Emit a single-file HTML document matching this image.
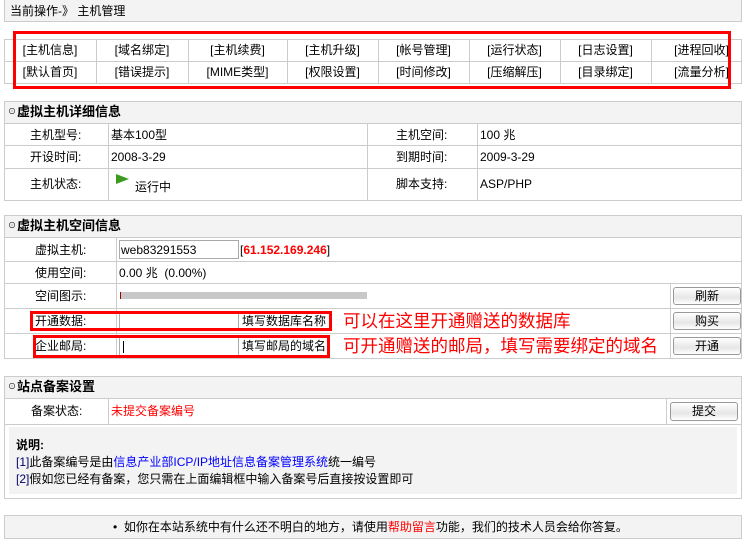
<!DOCTYPE html>
<html><head><meta charset="utf-8"><style>
*{margin:0;padding:0;box-sizing:border-box}
body{width:745px;height:543px;background:#fff;font-family:"Liberation Sans","Noto Sans CJK SC",sans-serif;font-size:12px;color:#000;position:relative;overflow:hidden}
.a{position:absolute}
.bx{position:absolute;border:1px solid #ccc}
.h{position:absolute;background:#f3f3f3;border:1px solid #ccc;font-weight:bold;font-size:13px;line-height:20px;padding-left:3px}
.h i{font-style:normal;font-size:8px;font-weight:normal;vertical-align:2px;margin-right:1px}
.l{position:absolute;border-left:1px solid #ccc;width:0}
.r{position:absolute;border-top:1px solid #ccc;height:0}
.t{position:absolute;line-height:14px;white-space:nowrap}
.c{text-align:center}
.red{color:#f00}
.btn{position:absolute;width:68px;height:19px;border:1px solid #999;border-radius:3px;background:linear-gradient(#fff,#e6e6e6 60%,#fff);text-align:center;line-height:17px;font-size:12px}
.inp{position:absolute;background:#fff;border:1px solid #aaa;height:19px}
.rb{position:absolute;border:3px solid #f00}
</style></head><body>
<div class="bx" style="left:4px;top:0;width:738px;height:22px;background:#f3f3f3;border-top:none"></div>
<div class="t" style="left:10px;top:4px;font-size:12px">当前操作-》 主机管理</div>

<div class="bx" style="left:4px;top:39px;width:738px;height:45px"></div>
<div class="r" style="left:4px;top:61px;width:738px"></div>
<div class="l" style="left:96px;top:39px;height:45px"></div>
<div class="l" style="left:188px;top:39px;height:45px"></div>
<div class="l" style="left:287px;top:39px;height:45px"></div>
<div class="l" style="left:378px;top:39px;height:45px"></div>
<div class="l" style="left:469px;top:39px;height:45px"></div>
<div class="l" style="left:560px;top:39px;height:45px"></div>
<div class="l" style="left:651px;top:39px;height:45px"></div>
<div class="t c" style="left:4px;top:43px;width:92px">[主机信息]</div>
<div class="t c" style="left:96px;top:43px;width:92px">[域名绑定]</div>
<div class="t c" style="left:188px;top:43px;width:99px">[主机续费]</div>
<div class="t c" style="left:287px;top:43px;width:91px">[主机升级]</div>
<div class="t c" style="left:378px;top:43px;width:91px">[帐号管理]</div>
<div class="t c" style="left:469px;top:43px;width:91px">[运行状态]</div>
<div class="t c" style="left:560px;top:43px;width:91px">[日志设置]</div>
<div class="t c" style="left:651px;top:43px;width:91px;padding-left:10px">[进程回收]</div>
<div class="t c" style="left:4px;top:65px;width:92px">[默认首页]</div>
<div class="t c" style="left:96px;top:65px;width:92px">[错误提示]</div>
<div class="t c" style="left:188px;top:65px;width:99px">[MIME类型]</div>
<div class="t c" style="left:287px;top:65px;width:91px">[权限设置]</div>
<div class="t c" style="left:378px;top:65px;width:91px">[时间修改]</div>
<div class="t c" style="left:469px;top:65px;width:91px">[压缩解压]</div>
<div class="t c" style="left:560px;top:65px;width:91px">[目录绑定]</div>
<div class="t c" style="left:651px;top:65px;width:91px;padding-left:10px">[流量分析]</div>
<div class="rb" style="left:13px;top:31px;width:718px;height:58px"></div>

<div class="bx" style="left:4px;top:101px;width:738px;height:100px"></div>
<div class="h" style="left:4px;top:101px;width:738px;height:23px"><i>⊙</i>虚拟主机详细信息</div>
<div class="r" style="left:4px;top:145px;width:738px"></div>
<div class="r" style="left:4px;top:168px;width:738px"></div>
<div class="l" style="left:108px;top:123px;height:78px"></div>
<div class="l" style="left:367px;top:123px;height:78px"></div>
<div class="l" style="left:477px;top:123px;height:78px"></div>
<div class="t" style="left:30px;top:128px">主机型号:</div>
<div class="t" style="left:111px;top:128px">基本100型</div>
<div class="t" style="left:396px;top:128px">主机空间:</div>
<div class="t" style="left:480px;top:128px">100 兆</div>
<div class="t" style="left:30px;top:150px">开设时间:</div>
<div class="t" style="left:111px;top:150px">2008-3-29</div>
<div class="t" style="left:396px;top:150px">到期时间:</div>
<div class="t" style="left:480px;top:150px">2009-3-29</div>
<div class="t" style="left:30px;top:177px">主机状态:</div>
<svg class="a" style="left:116px;top:174px" width="14" height="12"><path d="M0 0L13 5L0 10Z" fill="#3c9a1e"/></svg>
<div class="t" style="left:135px;top:180px">运行中</div>
<div class="t" style="left:396px;top:177px">脚本支持:</div>
<div class="t" style="left:480px;top:177px">ASP/PHP</div>

<div class="bx" style="left:4px;top:215px;width:738px;height:144px"></div>
<div class="h" style="left:4px;top:215px;width:738px;height:23px"><i>⊙</i>虚拟主机空间信息</div>
<div class="r" style="left:4px;top:261px;width:738px"></div>
<div class="r" style="left:4px;top:283px;width:738px"></div>
<div class="r" style="left:4px;top:308px;width:738px"></div>
<div class="r" style="left:4px;top:333px;width:738px"></div>
<div class="l" style="left:116px;top:237px;height:122px"></div>
<div class="l" style="left:670px;top:283px;height:76px"></div>
<div class="t" style="left:35px;top:243px">虚拟主机:</div>
<div class="inp" style="left:119px;top:240px;width:120px"></div>
<div class="t" style="left:121px;top:243px">web83291553</div>
<div class="t" style="left:240px;top:243px">[<b class="red">61.152.169.246</b>]</div>
<div class="t" style="left:35px;top:266px">使用空间:</div>
<div class="t" style="left:119px;top:266px">0.00 兆 &nbsp;(0.00%)</div>
<div class="t" style="left:35px;top:289px">空间图示:</div>
<div class="a" style="left:120px;top:292px;width:247px;height:7px;background:#c8c8c8;border-left:1px solid #900"></div>
<div class="btn" style="left:673px;top:287px;height:18px;line-height:16px">刷新</div>
<div class="t" style="left:35px;top:314px">开通数据:</div>
<div class="inp" style="left:119px;top:312px;width:120px"></div>
<div class="t" style="left:242px;top:314px">填写数据库名称</div>
<div class="btn" style="left:673px;top:312px;height:18px;line-height:16px">购买</div>
<div class="t" style="left:35px;top:339px">企业邮局:</div>
<div class="inp" style="left:119px;top:337px;width:120px"><div style="position:absolute;left:3px;top:3px;width:1px;height:12px;background:#000"></div></div>
<div class="t" style="left:242px;top:339px">填写邮局的域名</div>
<div class="btn" style="left:673px;top:337px;height:18px;line-height:16px">开通</div>
<div class="rb" style="left:30px;top:311px;width:302px;height:20px"></div>
<div class="rb" style="left:33px;top:335px;width:297px;height:23px"></div>
<div class="t red" style="left:343px;top:311px;font-size:17.5px;line-height:20px">可以在这里开通赠送的数据库</div>
<div class="t red" style="left:343px;top:336px;font-size:17.5px;line-height:20px">可开通赠送的邮局，填写需要绑定的域名</div>

<div class="bx" style="left:4px;top:376px;width:738px;height:123px"></div>
<div class="h" style="left:4px;top:376px;width:738px;height:23px"><i>⊙</i>站点备案设置</div>
<div class="r" style="left:4px;top:424px;width:738px"></div>
<div class="l" style="left:108px;top:398px;height:26px"></div>
<div class="l" style="left:666px;top:398px;height:26px"></div>
<div class="t" style="left:31px;top:404px">备案状态:</div>
<div class="t red" style="left:111px;top:404px">未提交备案编号</div>
<div class="btn" style="left:670px;top:402px">提交</div>
<div class="a" style="left:9px;top:427px;width:728px;height:67px;background:#f3f3f3"></div>
<div class="t" style="left:16px;top:438px;font-weight:bold;font-size:12px">说明:</div>
<div class="t" style="left:16px;top:455px"><span style="color:#006">[1]</span>此备案编号是由<span style="color:#00f">信息产业部ICP/IP地址信息备案管理系统</span>统一编号</div>
<div class="t" style="left:16px;top:472px"><span style="color:#006">[2]</span>假如您已经有备案，您只需在上面编辑框中输入备案号后直接按设置即可</div>

<div class="bx" style="left:4px;top:515px;width:738px;height:24px;background:#f3f3f3"></div>
<div class="t" style="left:113px;top:520px">•&nbsp;&nbsp;如你在本站系统中有什么还不明白的地方，请使用<span class="red">帮助留言</span>功能，我们的技术人员会给你答复。</div>
</body></html>
